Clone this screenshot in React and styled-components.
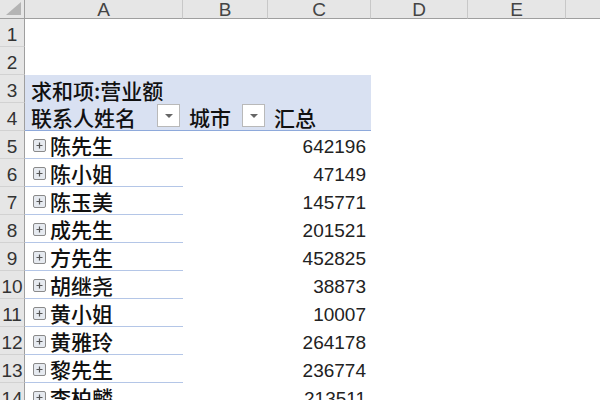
import React from "react";
import styled, { createGlobalStyle } from "styled-components";

const Global = createGlobalStyle`
  html, body { margin: 0; padding: 0; background: #fff; overflow: hidden; }
  body { width: 600px; height: 400px; font-family: "Liberation Sans", "Noto Sans CJK SC", sans-serif; }
`;

const Sheet = styled.div`
  display: grid;
  grid-template-columns: 25px 158px 85px 103px 97px 98px 60px;
  grid-template-rows: 19px repeat(14, 28px);
  width: 600px;
  height: 400px;
  overflow: hidden;
`;

const Corner = styled.div`
  position: relative;
  background: #e6e6e6;
  border-right: 1px solid #9f9f9f;
  border-bottom: 1px solid #9f9f9f;
  box-sizing: border-box;
  &::after {
    content: "";
    position: absolute;
    right: 3px;
    bottom: 3px;
    width: 0;
    height: 0;
    border-left: 15px solid transparent;
    border-bottom: 13px solid #b4b4b4;
  }
`;

const ColHead = styled.div`
  background: #e6e6e6;
  border-right: 1px solid #c8c8c8;
  border-bottom: 1px solid #9f9f9f;
  box-sizing: border-box;
  display: flex;
  align-items: center;
  justify-content: center;
  font-family: "Liberation Sans", sans-serif;
  font-size: 19px;
  color: #444;
  line-height: 1;
  padding-top: 1px;
`;

const RowHead = styled.div`
  background: #e6e6e6;
  border-right: 1px solid #9f9f9f;
  border-bottom: 1px solid #d2d2d2;
  box-sizing: border-box;
  display: flex;
  align-items: flex-end;
  justify-content: center;
  padding-bottom: 2px;
  font-family: "Liberation Sans", sans-serif;
  font-size: 19px;
  color: #333;
  line-height: 1;
`;

const Cell = styled.div`
  box-sizing: border-box;
  display: flex;
  align-items: flex-end;
  justify-content: ${(p) => (p.$right ? "flex-end" : "flex-start")};
  padding: 0 ${(p) => (p.$right ? "5px" : "0")} 2px ${(p) => (p.$right ? "0" : "6px")};
  background: ${(p) => (p.$pivot ? "#d9e1f2" : "#fff")};
  border-bottom: ${(p) =>
    p.$headLine ? "1px solid #8ea9db" : p.$rowLine ? "1px solid #b4c6e7" : "none"};
  font-family: "Noto Sans CJK SC", sans-serif;
  font-size: 21px;
  color: #111;
  line-height: 1;
  white-space: nowrap;
  overflow: visible;
`;

const Num = styled.span`
  font-family: "Liberation Sans", sans-serif;
  font-size: 19px;
  color: #222;
  line-height: 1;
  margin-bottom: 1px;
`;

const Label = styled.span`
  font-family: "Noto Sans CJK SC", sans-serif;
  font-size: 21px;
  font-weight: 500;
  color: #111;
  line-height: 1;
`;

const Expand = styled.span`
  display: inline-flex;
  align-items: center;
  justify-content: center;
  width: 13px;
  height: 13px;
  margin: 0 4px 4px 2px;
  border: 1px solid #8a8a8a;
  border-radius: 2px;
  background: #e6eaf0;
  box-sizing: border-box;
  svg { display: block; }
`;

const FilterBtn = styled.span`
  display: inline-flex;
  align-items: center;
  justify-content: center;
  width: 23px;
  height: 23px;
  margin-left: auto;
  margin-right: 3px;
  margin-bottom: 1px;
  border: 1px solid #b9b9b9;
  background: #fff;
  box-sizing: border-box;
  &::after {
    content: "";
    border-left: 4px solid transparent;
    border-right: 4px solid transparent;
    border-top: 4px solid #666;
  }
`;

const FieldCell = styled(Cell)`
  padding-right: 0;
`;

const cols = ["A", "B", "C", "D", "E", ""];

const data = [
  ["陈先生", "642196"],
  ["陈小姐", "47149"],
  ["陈玉美", "145771"],
  ["成先生", "201521"],
  ["方先生", "452825"],
  ["胡继尧", "38873"],
  ["黄小姐", "10007"],
  ["黄雅玲", "264178"],
  ["黎先生", "236774"],
  ["李柏麟", "213511"],
];

const PlusBox = () => (
  <Expand>
    <svg width="7" height="7" viewBox="0 0 7 7">
      <path d="M0.5 3.5H6.5M3.5 0.5V6.5" stroke="#555" strokeWidth="1.2" />
    </svg>
  </Expand>
);

const Empty = ({ n }) =>
  Array.from({ length: n }).map((_, i) => <Cell key={i} />);

export default function App() {
  return (
    <>
      <Global />
      <Sheet>
        <Corner />
        {cols.map((c, i) => (
          <ColHead key={i}>{c}</ColHead>
        ))}

        <RowHead>1</RowHead>
        <Empty n={6} />
        <RowHead>2</RowHead>
        <Empty n={6} />

        <RowHead>3</RowHead>
        <Cell $pivot>
          <Label>求和项:营业额</Label>
        </Cell>
        <Cell $pivot />
        <Cell $pivot />
        <Empty n={3} />

        <RowHead>4</RowHead>
        <FieldCell $pivot $headLine>
          <Label>联系人姓名</Label>
          <FilterBtn />
        </FieldCell>
        <FieldCell $pivot $headLine>
          <Label>城市</Label>
          <FilterBtn />
        </FieldCell>
        <Cell $pivot $headLine>
          <Label>汇总</Label>
        </Cell>
        <Empty n={3} />

        {data.map(([name, val], i) => (
          <React.Fragment key={name}>
            <RowHead>{i + 5}</RowHead>
            <Cell $rowLine>
              <PlusBox />
              <Label>{name}</Label>
            </Cell>
            <Cell />
            <Cell $right>
              <Num>{val}</Num>
            </Cell>
            <Empty n={3} />
          </React.Fragment>
        ))}
      </Sheet>
    </>
  );
}
